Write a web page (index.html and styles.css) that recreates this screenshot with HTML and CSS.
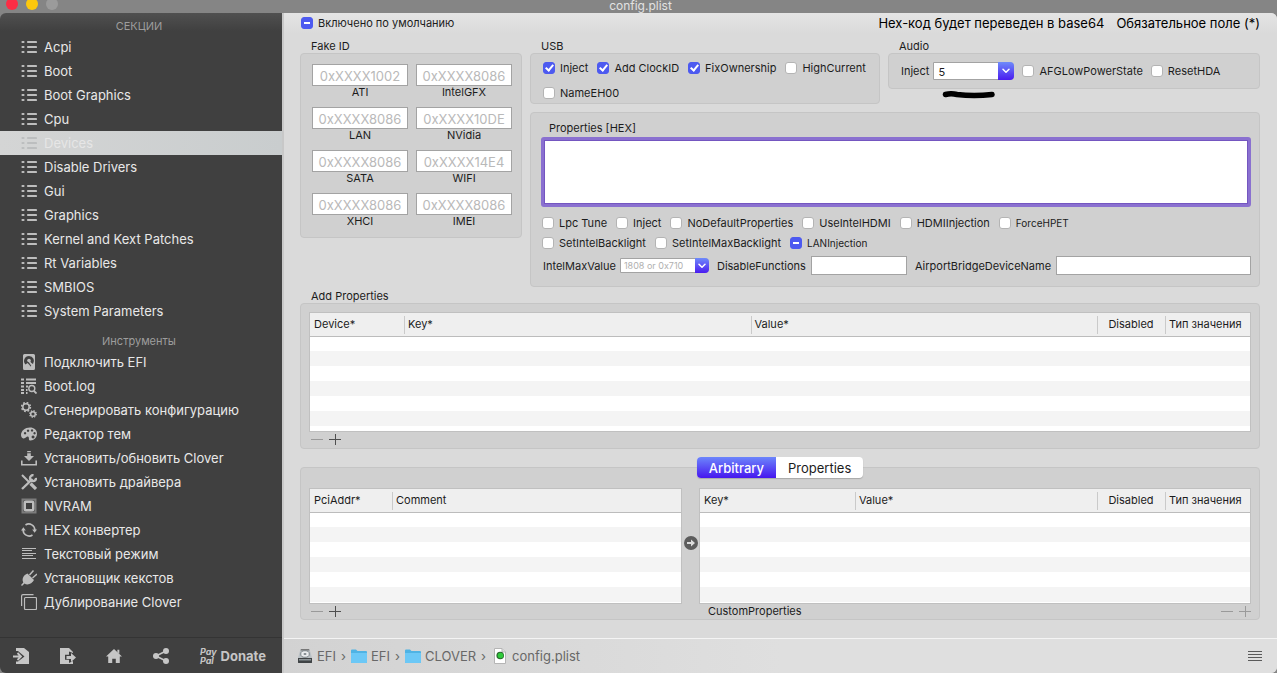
FILE: index.html
```html
<!DOCTYPE html>
<html lang="ru">
<head>
<meta charset="utf-8">
<title>config.plist</title>
<link rel="stylesheet" href="styles.css">
</head>
<body>
<svg class="defs" aria-hidden="true">
  <symbol id="i-list" viewBox="0 0 16 16"><path fill="none" stroke="currentColor" stroke-width="2.200" stroke-linecap="round" d="M1.500 3h1M1.500 8h1M1.500 13h1M7 3h8M7 8h8M7 13h8"/></symbol>
  <symbol id="i-folder" viewBox="0 0 16 14"><path d="M0 1.500Q0 .5 1 .5h4l1.500 1.500H15q1 0 1 1V13q0 1-1 1H1q-1 0-1-1z" fill="#4fb3e4"/><path d="M0 4h16v9q0 1-1 1H1q-1 0-1-1z" fill="#6cc8f6"/></symbol>
  <symbol id="i-down" viewBox="0 0 8 6"><path d="M1 1.200l3 3 3-3" fill="none" stroke="#fff" stroke-width="1.500" stroke-linecap="round" stroke-linejoin="round"/></symbol>
  <symbol id="i-minus" viewBox="0 0 12 12"><path d="M0 6.500h12" stroke="currentColor"/></symbol>
  <symbol id="i-plus" viewBox="0 0 12 12"><path d="M0 6.500h12M6.500 1v11" stroke="currentColor"/></symbol>
</svg>

<header class="titlebar">
  <div class="lights"><button class="light red" aria-label="Close"></button><button class="light yellow" aria-label="Minimize"></button><button class="light grey" aria-label="Zoom"></button></div>
  <h1>config.plist</h1>
</header>

<div class="app">
  <aside class="sidebar">
    <h2>СЕКЦИИ</h2>
    <nav>
      <a href="#"><svg><use href="#i-list"/></svg>Acpi</a>
      <a href="#"><svg><use href="#i-list"/></svg>Boot</a>
      <a href="#"><svg><use href="#i-list"/></svg>Boot Graphics</a>
      <a href="#"><svg><use href="#i-list"/></svg>Cpu</a>
      <a href="#" class="active"><svg><use href="#i-list"/></svg>Devices</a>
      <a href="#"><svg><use href="#i-list"/></svg>Disable Drivers</a>
      <a href="#"><svg><use href="#i-list"/></svg>Gui</a>
      <a href="#"><svg><use href="#i-list"/></svg>Graphics</a>
      <a href="#"><svg><use href="#i-list"/></svg>Kernel and Kext Patches</a>
      <a href="#"><svg><use href="#i-list"/></svg>Rt Variables</a>
      <a href="#"><svg><use href="#i-list"/></svg>SMBIOS</a>
      <a href="#"><svg><use href="#i-list"/></svg>System Parameters</a>
    </nav>
    <h2 class="tools">Инструменты</h2>
    <nav>
      <a href="#"><svg viewBox="0 0 16 16"><path fill="currentColor" fill-rule="evenodd" d="M3.500 0h9Q14 0 14 1.500v13q0 1.500-1.500 1.500h-9Q2 16 2 14.500v-13Q2 0 3.500 0zM8 2a5 5 0 0 0-3.500 8.500L6.500 9l2 2 1 1.500 1.500-1-1.500-3 2.500 1.500A5 5 0 0 0 8 2z"/><circle cx="8" cy="6.500" r="1.800" fill="currentColor"/><path d="M8 7l4 6" stroke="currentColor" stroke-width="1.500"/></svg>Подключить EFI</a>
      <a href="#"><svg viewBox="0 0 16 16"><path stroke="currentColor" stroke-width="1.800" fill="none" d="M0 1.500h3M5 1.500h10M0 5h3M5 5h10M0 8.500h3M5 8.500h2M0 12h3M5 12h1.500M0 15h3M5 15h1.500"/><circle cx="10.800" cy="10.500" r="3" fill="none" stroke="currentColor" stroke-width="1.400"/><path d="M13 13l2.500 2.500" stroke="currentColor" stroke-width="1.800"/></svg>Boot.log</a>
      <a href="#"><svg viewBox="0 0 16 16"><g fill="none" stroke="currentColor"><circle cx="5" cy="5" r="3.200" stroke-width="1.500"/><circle cx="5" cy="5" r="4.400" stroke-width="1.600" stroke-dasharray="1.730 1.730"/><circle cx="12" cy="12" r="2.300" stroke-width="1.500"/><circle cx="12" cy="12" r="3.300" stroke-width="1.300" stroke-dasharray="1.300 1.300"/></g></svg>Сгенерировать конфигурацию</a>
      <a href="#"><svg viewBox="0 0 16 16"><path fill="currentColor" fill-rule="evenodd" d="M9 1.500c4 0 7 2.500 7 6 0 4-3 7-6.500 7-2.500 0-1-2.500-2-3.500-1.500-1.500-3 2-5 1.500C.8 12 0 10.500 0 9c0-4 4-7.500 9-7.500zM4 6a1.200 1.200 0 1 0 .1 0zM7 3.500a1.200 1.200 0 1 0 .1 0zM11 3.300a1.200 1.200 0 1 0 .1 0zM13.500 6a1.200 1.200 0 1 0 .1 0zM12 9.500a1.500 1.500 0 1 0 .1 0z"/></svg>Редактор тем</a>
      <a href="#"><svg viewBox="0 0 16 16"><path fill="currentColor" d="M6.200 1h3.600v1.200H6.200zM6.200 3.200h3.600V6H13l-5 5-5-5h3.200zM0 10.500h1.600V14h12.800v-3.500H16v5H0z"/></svg>Установить/обновить Clover</a>
      <a href="#"><svg viewBox="0 0 16 16"><g fill="none" stroke="currentColor"><path stroke-width="2.400" d="M1 15L11.500 5"/><path stroke-width="2.400" d="M12.500 1.200a3 3 0 1 0 2.500 2.600"/><path stroke-width="2" d="M1 1l7 7"/><path stroke-width="3.200" d="M9.500 9.500L15 15"/></g></svg>Установить драйвера</a>
      <a href="#"><svg viewBox="0 0 16 16"><rect x="1.500" y="1.500" width="13" height="13" fill="none" stroke="#7c7c7c" stroke-width="2"/><rect x="3.800" y="3.800" width="8.400" height="8.400" rx="1" fill="none" stroke="currentColor" stroke-width="2.400"/></svg>NVRAM</a>
      <a href="#"><svg viewBox="0 0 16 16"><path fill="none" stroke="currentColor" stroke-width="1.600" d="M4.500 3a6 6 0 0 1 9.300 5.500M11.500 13a6 6 0 0 1-9.300-5.500"/><path fill="currentColor" d="M11.200 7.500H16l-2.400 3.300zM0 8.500h4.800L2.400 5.200z"/></svg>HEX конвертер</a>
      <a href="#"><svg viewBox="0 0 16 16"><path stroke="currentColor" d="M1 2.500h14M1 4.500h10M1 7.500h14M1 9.500h11M1 12.500h14"/></svg>Текстовый режим</a>
      <a href="#"><svg viewBox="0 0 16 16"><path fill="currentColor" d="M6.500 3.500l6.500 6.500c-2 4-6.500 5.500-9.500 3.500L1 16l-1-1 2.300-2.600C.5 9 2.500 5 6.500 3.500z"/><path stroke="currentColor" stroke-width="1.500" d="M8.500 5l4-4.500M11.500 8L16 4"/></svg>Установщик кекстов</a>
      <a href="#"><svg viewBox="0 0 16 16"><path fill="none" stroke="currentColor" stroke-width="1.200" d="M.6 12V2Q.6.600 2 .600h10.500M4.500 3.500h10q1 0 1 1v10q0 1-1 1h-10q-1 0-1-1v-10q0-1 1-1z"/></svg>Дублирование Clover</a>
    </nav>
    <footer class="actions">
      <button aria-label="Import"><svg viewBox="0 0 16 16"><path fill="currentColor" d="M3 0h8l5 4v12H3v-2.500h2l6.500-5L5 3H3z"/><path fill="none" stroke="currentColor" stroke-width="1.800" d="M0 8.500h7M4.500 5l3.500 3.500L4.500 12"/></svg></button>
      <button aria-label="Export"><svg viewBox="0 0 16 16"><path fill="currentColor" d="M0 0h9l4 4v1L9 3.500v3.200H5v5h4V15l4-2v3H0z"/><path fill="currentColor" d="M6.500 8H11V5l5 4.500-5 4.500v-3H6.500z"/></svg></button>
      <button aria-label="Home"><svg viewBox="0 0 18 16"><path fill="currentColor" d="M9 0l9 8.500h-2.500V16h-4.500v-5H7v5H2.500V8.500H0zM12.800 1h2.200v4.500l-2.200-2z"/></svg></button>
      <button aria-label="Share"><svg viewBox="0 0 16 16"><g fill="currentColor"><circle cx="3" cy="8" r="3"/><circle cx="13" cy="3" r="3"/><circle cx="13" cy="13" r="3"/></g><path fill="none" stroke="currentColor" stroke-width="1.600" d="M13 3L3 8l10 5"/></svg></button>
      <button class="donate"><span class="paypal">Pay<br>Pal</span>Donate</button>
    </footer>
  </aside>

  <div class="main">
    <main class="content">
      <div class="top">
        <label class="check"><input type="checkbox" class="mixed" checked aria-checked="mixed">Включено по умолчанию</label>
        <p class="notes"><span>Hex-код будет переведен в base64</span><span>Обязательное поле (*)</span></p>
      </div>

      <div class="upper">
        <section>
          <h3>Fake ID</h3>
          <div class="box ids">
            <label><input type="text" placeholder="0xXXXX1002">ATI</label>
            <label><input type="text" placeholder="0xXXXX8086">IntelGFX</label>
            <label><input type="text" placeholder="0xXXXX8086">LAN</label>
            <label><input type="text" placeholder="0xXXXX10DE">NVidia</label>
            <label><input type="text" placeholder="0xXXXX8086">SATA</label>
            <label><input type="text" placeholder="0xXXXX14E4">WIFI</label>
            <label><input type="text" placeholder="0xXXXX8086">XHCI</label>
            <label><input type="text" placeholder="0xXXXX8086">IMEI</label>
          </div>
        </section>

        <div class="right">
          <div class="pair">
            <section class="usb">
              <h3>USB</h3>
              <div class="box usb-box">
                <div class="checks">
                  <label class="check"><input type="checkbox" checked>Inject</label>
                  <label class="check"><input type="checkbox" checked>Add ClockID</label>
                  <label class="check"><input type="checkbox" checked>FixOwnership</label>
                  <label class="check"><input type="checkbox">HighCurrent</label>
                </div>
                <div class="checks"><label class="check"><input type="checkbox">NameEH00</label></div>
              </div>
            </section>
            <section class="audio">
              <h3>Audio</h3>
              <div class="box audio-box">
                <label for="inject">Inject</label>
                <span class="combo">
                  <select id="inject"><option>5</option></select>
                  <span class="arrow"><svg><use href="#i-down"/></svg></span>
                  <svg class="stroke" viewBox="0 0 54 8"><path d="M3.500 3.500Q9 2 15 3.500Q32 5.500 50 3.500" fill="none" stroke="#000" stroke-width="5.500" stroke-linecap="round"/></svg>
                </span>
                <label class="check"><input type="checkbox">AFGLowPowerState</label>
                <label class="check"><input type="checkbox">ResetHDA</label>
              </div>
            </section>
          </div>

          <section class="box props">
            <label class="hex" for="hex">Properties [HEX]</label>
            <textarea id="hex"></textarea>
            <div class="checks first">
              <label class="check"><input type="checkbox">Lpc Tune</label>
              <label class="check"><input type="checkbox">Inject</label>
              <label class="check"><input type="checkbox">NoDefaultProperties</label>
              <label class="check"><input type="checkbox">UseIntelHDMI</label>
              <label class="check"><input type="checkbox">HDMIInjection</label>
              <label class="check small"><input type="checkbox">ForceHPET</label>
            </div>
            <div class="checks">
              <label class="check"><input type="checkbox">SetIntelBacklight</label>
              <label class="check"><input type="checkbox">SetIntelMaxBacklight</label>
              <label class="check small"><input type="checkbox" class="mixed" checked aria-checked="mixed">LANInjection</label>
            </div>
            <div class="fields">
              <label for="imv">IntelMaxValue</label>
              <span class="combo mini">
                <select id="imv"><option>1808 or 0x710</option></select>
                <span class="arrow"><svg><use href="#i-down"/></svg></span>
              </span>
              <label for="df">DisableFunctions</label>
              <input type="text" id="df" class="df">
              <label for="abd">AirportBridgeDeviceName</label>
              <input type="text" id="abd" class="abd">
            </div>
          </section>
        </div>
      </div>

      <section class="add">
        <h3>Add Properties</h3>
        <div class="box table-box">
          <div class="rows tall">
            <table>
              <colgroup><col class="c-device"><col><col><col class="c-dis"><col class="c-type"></colgroup>
              <thead><tr><th>Device*</th><th>Key*</th><th>Value*</th><th class="mid">Disabled</th><th>Тип значения</th></tr></thead>
            </table>
          </div>
          <div class="under">
            <button class="pm off" aria-label="Remove"><svg><use href="#i-minus"/></svg></button>
            <button class="pm" aria-label="Add"><svg><use href="#i-plus"/></svg></button>
          </div>
        </div>
      </section>

      <section class="box table-box lower">
        <div class="tabs"><button class="on">Arbitrary</button><button>Properties</button></div>
        <div class="split">
          <div>
            <div class="rows">
              <table>
                <colgroup><col class="c-pci"><col></colgroup>
                <thead><tr><th>PciAddr*</th><th>Comment</th></tr></thead>
              </table>
            </div>
            <div class="under">
              <button class="pm off" aria-label="Remove"><svg><use href="#i-minus"/></svg></button>
              <button class="pm" aria-label="Add"><svg><use href="#i-plus"/></svg></button>
            </div>
          </div>
          <svg class="go" viewBox="0 0 14 14"><circle cx="7" cy="7" r="7" fill="#5c5c5c"/><path d="M3 6h4V3.600L11 7l-4 3.400V8H3z" fill="#dcdcdc"/></svg>
          <div>
            <div class="rows">
              <table>
                <colgroup><col class="c-key"><col><col class="c-dis"><col class="c-type"></colgroup>
                <thead><tr><th>Key*</th><th>Value*</th><th class="mid">Disabled</th><th>Тип значения</th></tr></thead>
              </table>
            </div>
            <div class="under">
              <span class="custom">CustomProperties</span>
              <button class="pm off" aria-label="Remove"><svg><use href="#i-minus"/></svg></button>
              <button class="pm off" aria-label="Add"><svg><use href="#i-plus"/></svg></button>
            </div>
          </div>
        </div>
      </section>
    </main>

    <footer class="pathbar">
      <a href="#"><svg viewBox="0 0 16 16"><path d="M3.500 1h9L15 10H1z" fill="#b9c0c4"/><path d="M4 1h8l.5 1.500h-9z" fill="#777"/><ellipse cx="8" cy="6" rx="4.300" ry="3.300" fill="#e9edef" stroke="#7c868b"/><ellipse cx="8" cy="6" rx="1.500" ry="1" fill="#7c868b"/><path d="M1 10h14v4.500q0 .5-1 .5H2q-1 0-1-.5z" fill="#3f4345"/><path d="M2 11h12v1.500H2z" fill="#8b9498"/></svg>EFI</a>
      <span class="sep">›</span>
      <a href="#"><svg class="folder"><use href="#i-folder"/></svg>EFI</a>
      <span class="sep">›</span>
      <a href="#"><svg class="folder"><use href="#i-folder"/></svg>CLOVER</a>
      <span class="sep">›</span>
      <a href="#" class="file"><svg class="doc" viewBox="0 0 12 16"><path d="M.5.500H8L11.500 4v11.500H.5z" fill="#fff" stroke="#b5b5b5"/><path d="M8 .500V4h3.500" fill="#ddd" stroke="#b5b5b5"/><circle cx="6.200" cy="7.500" r="3.800" fill="#2b6a2f"/><circle cx="6.500" cy="7.500" r="2.800" fill="#2fc93a"/></svg>config.plist</a>
      <button class="menu" aria-label="Menu"><svg viewBox="0 0 14 11"><path stroke="#5a5a5a" d="M0 .500h14M0 3.500h14M0 6.500h14M0 9.500h14"/></svg></button>
    </footer>
  </div>
</div>
</body>
</html>
```

FILE: styles.css
```css
* { box-sizing: border-box; }
body {
  margin: 0;
  min-height: 100vh;
  display: flex;
  flex-direction: column;
  font: 11px/14px Inter, "Liberation Sans", sans-serif;
  color: #1c1c1c;
  background: #858585;
}
h1, h2, h3, p { margin: 0; font-weight: 400; }
a { color: inherit; text-decoration: none; }
button { border: 0; padding: 0; background: none; font: inherit; color: inherit; }
svg { display: block; flex: none; }
.defs { position: absolute; width: 0; height: 0; }

.titlebar { position: relative; height: 13px; background: #858585; }
.titlebar h1 { text-align: center; font-size: 12px; line-height: 12px; color: #e2e2e2; padding-left: 4px; }
.lights { position: absolute; left: 6px; top: -2px; display: flex; gap: 8px; }
.light { width: 12px; height: 12px; border-radius: 50%; }
.red { background: #fc2d45; }
.yellow { background: #fdc80c; }
.grey { background: #9b9b9b; }

.app { flex: 1; display: grid; grid-template-columns: 282px minmax(0, 1fr); }

.sidebar {
  display: flex;
  flex-direction: column;
  background: linear-gradient(#505050, #404040 18px);
  color: #e8e8e8;
  border-radius: 6px 0 0 6px;
}
.sidebar h2 { font-size: 11px; line-height: 14px; padding: 6px 4px 2px 0; text-align: center; color: #9d9d9d; }
.sidebar h2.tools { padding: 11px 4px 2px 0; }
.sidebar nav a { display: flex; align-items: center; gap: 7px; height: 24px; padding-left: 21px; font-size: 13px; line-height: 16px; }
.sidebar nav svg { width: 16px; height: 16px; color: #bdbdbd; }
.sidebar nav a.active { background: linear-gradient(90deg, #d4d5d5, #c9cdce); color: #e6e6e6; }
.sidebar nav a.active svg { color: #bcbebf; }
.actions { margin-top: auto; height: 36px; display: flex; align-items: center; border-top: 1px solid #343434; padding: 0 16px 0 13px; justify-content: space-between; color: #c6c6c6; }
.actions svg { width: 16px; height: 16px; }
.donate { display: flex; align-items: center; gap: 4px; font-size: 13px; line-height: 16px; font-weight: 700; }
.paypal { font-size: 9px; line-height: 9px; font-style: italic; text-align: left; }

.main { display: flex; flex-direction: column; background: #dadada; border-left: 2px solid #c8c8c8; border-radius: 0 6px 6px 0; }
.content { flex: 1; padding: 3px 17px 0 16px; background: linear-gradient(#e4e4e4, #dadada 20px); border-top-right-radius: 6px; }
.top { display: flex; justify-content: space-between; align-items: center; padding-left: 1px; }
.notes { display: flex; gap: 12px; font-size: 13px; line-height: 14px; color: #000; }

.check { display: flex; align-items: center; gap: 5px; white-space: nowrap; }
.check input {
  appearance: none;
  margin: 0;
  width: 12px;
  height: 12px;
  border-radius: 3px;
  background: #fff;
  border: 1px solid #b4b4b4;
  display: grid;
  place-items: center;
}
.check input:checked { background: #4d5af0; border-color: #4d5af0; }
.check input:checked::before { content: ""; width: 3px; height: 6px; border: solid #fff; border-width: 0 2px 2px 0; transform: rotate(40deg); margin-bottom: 2px; }
.check input.mixed:checked::before { width: 6px; height: 2px; border: 0; background: #fff; transform: none; margin: 0; }
.small { font-size: 10px; }

h3 { font-size: 11px; line-height: 14px; padding-left: 11px; }
.box { background: #d0d0d0; border: 1px solid #c5c5c5; border-radius: 4px; }
.upper { display: grid; grid-template-columns: 222px minmax(0, 1fr); gap: 8px; margin-top: 9px; }
.ids { display: grid; grid-template-columns: 1fr 1fr; gap: 9px 8px; padding: 10px 9px 10px 11px; }
.ids label { display: flex; flex-direction: column; text-align: center; line-height: 12px; }
input[type="text"] { border: 1px solid #a3a3a3; background: #fff; font: inherit; font-size: 13px; padding: 2px 4px 0; width: 100%; border-radius: 0; margin: 0; min-width: 0; }
.ids input[type="text"] { height: 22px; text-align: center; }
::placeholder { color: #b9b9b9; opacity: 1; }

.right { display: flex; flex-direction: column; gap: 8px; }
.pair { display: grid; grid-template-columns: 350px minmax(0, 1fr); gap: 8px; }
.usb-box { display: flex; flex-direction: column; gap: 11px; padding: 7px 12px 3px; }
.checks { display: flex; gap: 9px; }
.audio-box { display: flex; align-items: center; gap: 8px; padding: 8px 12px; }
.audio-box > label:first-child { margin-right: -4px; }

.combo { position: relative; display: flex; width: 81px; height: 18px; }
.combo select { appearance: none; width: 100%; border: 1px solid #a3a3a3; border-radius: 0 4px 4px 0; background: #fff; font: inherit; color: inherit; padding: 1px 4px 0; }
.arrow { position: absolute; right: 0; top: 0; bottom: 0; width: 16px; display: grid; place-items: center; background: linear-gradient(#6f8bfa, #4a1cf0); border-radius: 0 4px 4px 0; pointer-events: none; }
.arrow svg { width: 8px; height: 6px; }
.stroke { position: absolute; left: 9px; top: 29px; width: 54px; height: 8px; }
.mini { width: 89px; height: 15px; }
.mini select { font-size: 9px; line-height: 11px; color: #b0b0b0; padding: 0 3px; }
.mini .arrow { width: 14px; }

.props { display: flex; flex-direction: column; padding: 8px 8px 10px 10px; }
.hex { padding: 0 8px 2px; }
textarea { display: block; width: 100%; height: 70px; border: 3px solid #8a70d0; border-radius: 3px; background: #fff; box-shadow: inset 0 0 0 1px #7456c0; resize: none; margin: 0; font: inherit; }
.props .checks { padding-left: 1px; margin-bottom: 6px; }
.props .checks.first { margin-top: 9px; }
.fields { display: flex; align-items: center; gap: 8px; padding-left: 2px; white-space: nowrap; margin-bottom: 1px; }
.fields label { margin-right: -3px; }
.fields label:first-child { margin-right: -4px; }
.fields input[type="text"] { height: 19px; }
.fields .df { width: 96px; flex: none; }
.fields .abd { flex: 1; }

.add { margin-top: 2px; }
.table-box { padding: 8px 8px 0; }
.rows {
  min-height: 116px;
  border: 1px solid #c0c0c0;
  background: repeating-linear-gradient(#fff 0 15px, #f4f4f4 15px 30px) 0 23px;
}
.tall { min-height: 120px; }
table { width: 100%; table-layout: fixed; border-collapse: separate; border-spacing: 0; background: #efefef; }
th { height: 24px; padding: 0 4px 1px; text-align: left; font-weight: 400; border-bottom: 1px solid #bcbcbc; background: linear-gradient(#cacaca, #cacaca) left center / 1px 18px no-repeat; white-space: nowrap; }
th:first-child { background: none; }
th.mid { text-align: center; }
.c-device { width: 94px; }
.c-pci { width: 82px; }
.c-key { width: 155px; }
.c-dis { width: 68px; }
.c-type { width: 85px; }
.under { display: flex; align-items: center; gap: 6px; height: 15px; padding: 0 0 2px 2px; }
.tall + .under { height: 16px; }
.pm { color: #4f4f4f; }
.pm.off { color: #9a9a9a; }
.pm svg { width: 12px; height: 12px; }
.custom { flex: 1; padding-left: 7px; }

.lower { margin-top: 18px; padding-top: 0; }
.tabs { display: flex; width: max-content; margin: -11px auto 10px; border-radius: 4px; background: #fff; box-shadow: 0 1px 1px #a8a8a8; overflow: hidden; position: relative; }
.tabs button { padding: 0 12px; height: 21px; font-size: 13px; }
.tabs .on { color: #fff; background: linear-gradient(#6c86fb, #4616ef); font-weight: 500; }
.split { display: grid; grid-template-columns: minmax(0, 373fr) 17px minmax(0, 552fr); }
.go { width: 14px; height: 14px; align-self: center; justify-self: center; margin-bottom: 22px; }

.pathbar { display: flex; align-items: center; height: 35px; padding: 0 15px 0 13px; gap: 5px; background: linear-gradient(90deg, #d2d2d2, #dfdfdf 50%); border-top: 1px solid #f4f4f4; border-bottom-right-radius: 6px; font-size: 13px; line-height: 16px; color: #686868; }
.pathbar a { display: flex; align-items: center; gap: 4px; }
.pathbar .file { gap: 6px; padding-left: 3px; }
.pathbar svg { width: 16px; height: 16px; }
.pathbar .folder { height: 14px; }
.pathbar .doc { width: 12px; }
.pathbar .menu { margin-left: auto; }
.pathbar .menu svg { width: 14px; height: 11px; }
```
